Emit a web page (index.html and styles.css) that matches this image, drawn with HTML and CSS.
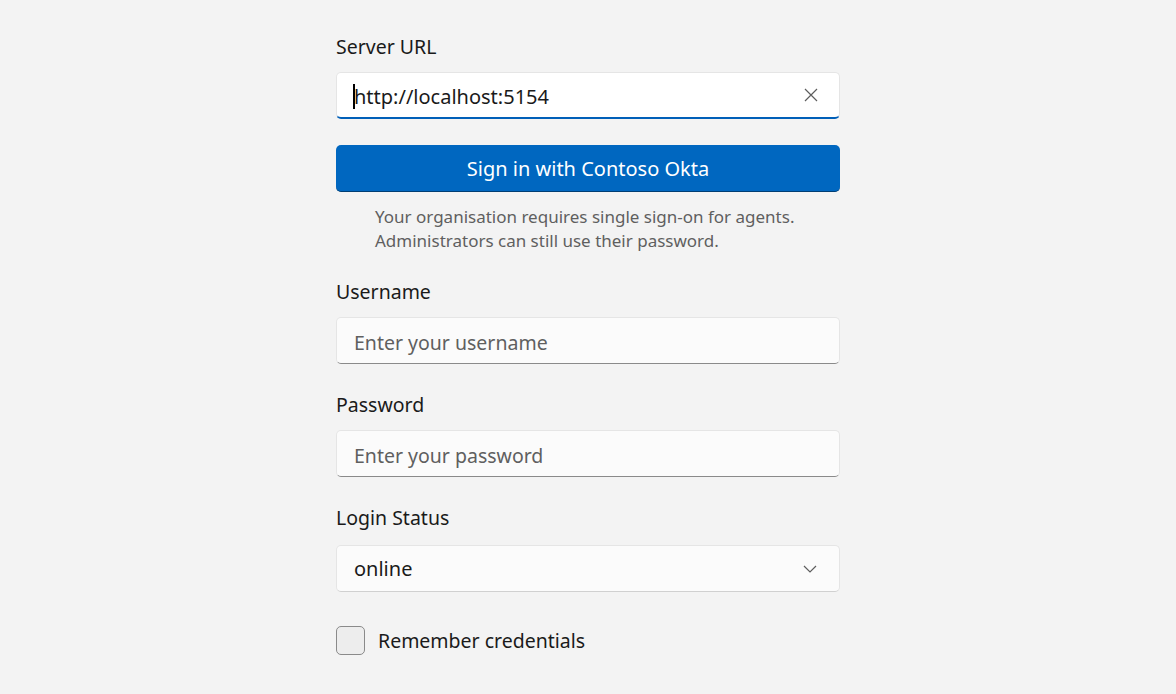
FILE: index.html
```html
<!DOCTYPE html>
<html lang="en">
<head>
  <meta charset="UTF-8" />
  <meta name="viewport" content="width=device-width, initial-scale=1" />
  <title>Sign in</title>
  <link rel="stylesheet" href="styles.css">
</head>
<body>
  <main class="login">
    <label class="field-label" for="serverUrl">Server URL</label>
    <div class="text-box focused">
      <span class="caret"></span>
      <span class="text-value">http://localhost:5154</span>
      <button class="clear-btn" aria-label="Clear">
        <svg width="14" height="14" viewBox="0 0 14 14">
          <path d="M1 1 L13 13 M13 1 L1 13" stroke="#5d5d5d" stroke-width="1.2" fill="none" />
        </svg>
      </button>
    </div>

    <button class="sso-button">Sign in with Contoso Okta</button>

    <p class="sso-note">
      Your organisation requires single sign-on for agents.<br>
      Administrators can still use their password.
    </p>

    <label class="field-label" for="username">Username</label>
    <div class="text-box">
      <span class="placeholder">Enter your username</span>
    </div>

    <label class="field-label" for="password">Password</label>
    <div class="text-box">
      <span class="placeholder">Enter your password</span>
    </div>

    <label class="field-label status-label">Login Status</label>
    <div class="combo-box">
      <span class="text-value">online</span>
      <svg class="chevron" width="14" height="8" viewBox="0 0 14 8">
        <path d="M1 1 L7 7 L13 1" stroke="#5d5d5d" stroke-width="1.2" fill="none" />
      </svg>
    </div>

    <label class="check-row">
      <span class="check-box"></span>
      <span>Remember credentials</span>
    </label>
  </main>
</body>
</html>
```

FILE: styles.css
```css
body {
  margin: 0;
  background-color: #f3f3f3;
  font-family: "Noto Sans", "Open Sans", sans-serif;
  color: #1a1a1a;
  min-height: 100vh;
}

.login {
  width: 504px;
  margin: 0 auto;
  padding-top: 33px;
  display: flex;
  flex-direction: column;
}

.field-label {
  font-size: 19.5px;
  line-height: 28px;
  height: 28px;
  margin-bottom: 11px;
}

.status-label {
  margin-bottom: 13px;
}

/* Fluent style text boxes */
.text-box,
.combo-box {
  box-sizing: border-box;
  height: 47px;
  display: flex;
  align-items: center;
  padding: 3px 16px 0 17px;
  background-color: #fbfbfb;
  border: 1px solid #e5e5e5;
  border-bottom: 1px solid #8a8a8a;
  border-radius: 5px;
  margin-bottom: 27px;
  font-size: 20px;
}

.text-box.focused {
  background-color: #ffffff;
  border-bottom: 2px solid #005fb8;
  margin-bottom: 26px;
  position: relative;
}

.caret {
  position: absolute;
  left: 16px;
  top: 11px;
  width: 2px;
  height: 25px;
  background-color: #000;
}

.text-value {
  flex: 1;
  color: #1a1a1a;
}

.placeholder {
  color: #5f5f5f;
  font-size: 19.5px;
}

.clear-btn {
  border: none;
  background: none;
  padding: 0;
  width: 16px;
  height: 16px;
  display: flex;
  align-items: center;
  justify-content: center;
  margin: -3px 4px 0 0;
}

.sso-button {
  height: 47px;
  border: none;
  border-bottom: 1px solid #003e73;
  border-radius: 5px;
  background-color: #0067c0;
  color: #ffffff;
  font-family: inherit;
  font-size: 20px;
  cursor: pointer;
}

.sso-note {
  margin: 13px 0 25px 39px;
  font-size: 17px;
  line-height: 24px;
  color: #5f5f5f;
}

.combo-box {
  margin-bottom: 34px;
  padding-top: 0;
  border-bottom-color: #d0d0d0;
}

.chevron {
  margin: 0 6px 0 0;
}

.check-row {
  display: flex;
  align-items: center;
  gap: 13px;
  font-size: 19.5px;
  height: 30px;
  margin-top: -1px;
}

.check-box {
  box-sizing: border-box;
  width: 29px;
  height: 29px;
  border: 1px solid #8a8a8a;
  border-radius: 5px;
  background-color: #ededed;
}
```
